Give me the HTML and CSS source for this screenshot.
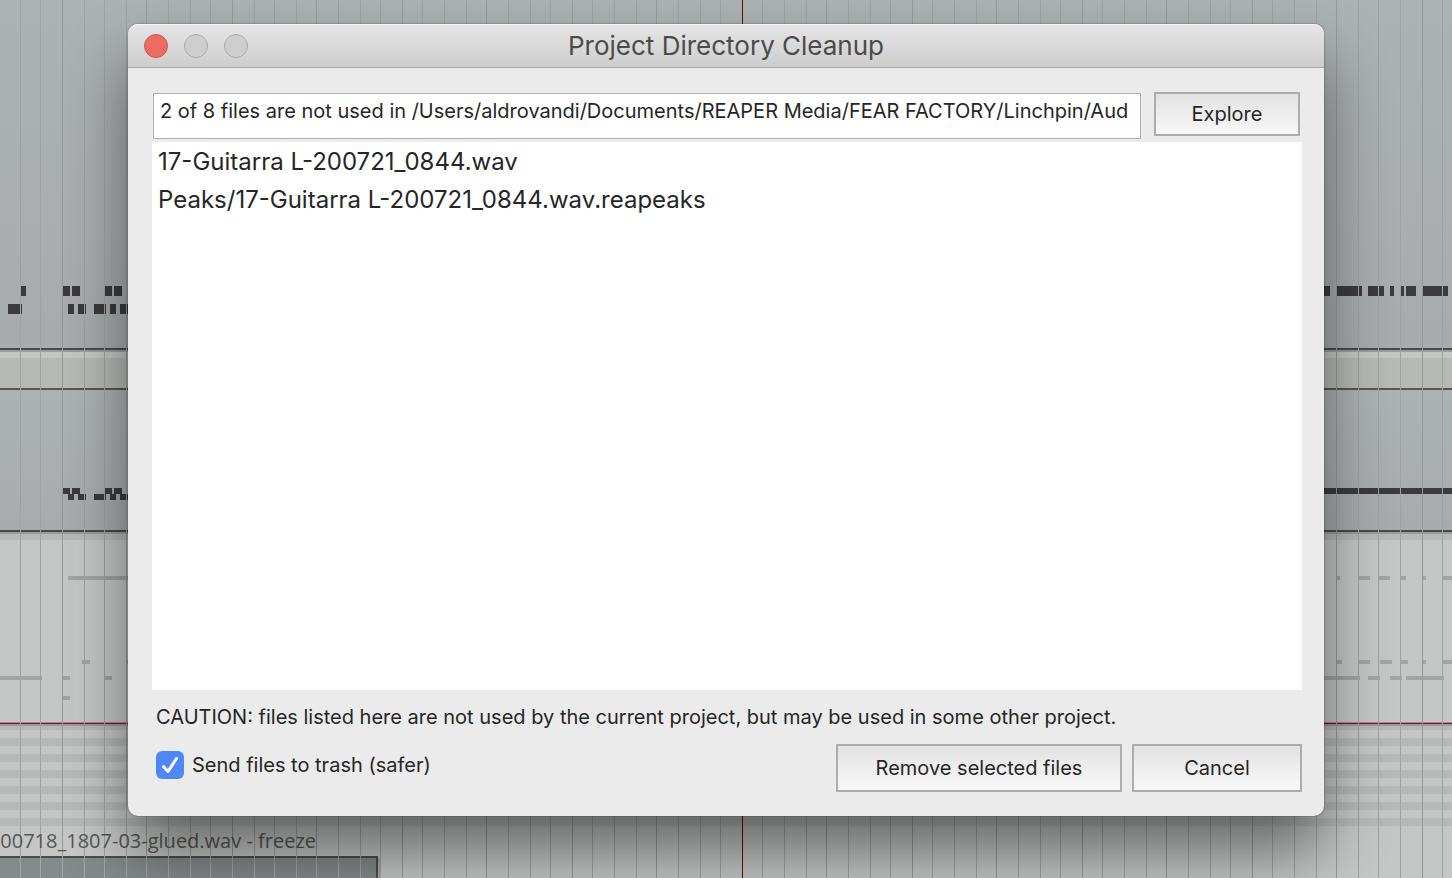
FILE: index.html
```html
<!DOCTYPE html>
<html lang="en">
<head>
<meta charset="utf-8">
<title>Project Directory Cleanup</title>
<link rel="stylesheet" href="styles.css">
</head>
<body>
<svg class="arrange" width="100%" height="100%" aria-hidden="true">
  <defs>
    <linearGradient id="lane" x1="0" y1="0" x2="0" y2="1">
      <stop offset="0" stop-color="#adb2b3"/>
      <stop offset="1" stop-color="#a7abac"/>
    </linearGradient>
    <pattern id="keys" width="16" height="16" y="738" patternUnits="userSpaceOnUse">
      <rect width="16" height="8" fill="#b6b9b7"/>
    </pattern>
  </defs>
  <rect width="100%" height="100%" fill="#c4c7c5"/>
  <rect width="100%" height="348" fill="url(#lane)"/>
  <rect y="348" width="100%" height="2" fill="#494a4a"/>
  <rect y="350" width="100%" height="2" fill="#9b9d9d"/>
  <rect y="358" width="100%" height="30" fill="#b7b9b7"/>
  <rect y="388" width="100%" height="2" fill="#565856"/>
  <rect y="390" width="100%" height="140" fill="url(#lane)"/>
  <rect y="530" width="100%" height="2" fill="#494a4a"/>
  <rect y="532" width="100%" height="2" fill="#9b9d9d"/>
  <rect y="534" width="100%" height="6" fill="#b6b9b7"/>
  <rect y="722" width="100%" height="1" fill="#d07391"/>
  <rect y="723" width="100%" height="1" fill="#5c2439"/>
  <rect y="724" width="100%" height="2" fill="#999b9a"/>
  <rect y="726" width="100%" height="4" fill="#b6b9b7"/>
  <rect y="738" width="100%" height="88" fill="url(#keys)"/>
  <path class="note" d="M21 286h5v10h-5zM63 286h7v10h-7zM72 286h8v10h-8zM105 286h7v10h-7zM114 286h8v10h-8zM8 304h14v10h-14zM68 304h6v10h-6zM78 304h8v10h-8zM94 304h12v10h-12zM110 304h6v10h-6zM120 304h8v10h-8z"/>
  <path class="note" d="M63 488h7v6h-7zM72 488h8v6h-8zM68 494h6v6h-6zM78 494h8v6h-8zM94 494h12v6h-12zM105 488h7v6h-7zM114 488h8v6h-8zM110 494h6v6h-6zM120 494h8v6h-8z"/>
  <path class="note" d="M1320 286h10v10h-10zM1337 286h25v10h-25zM1368 286h16v10h-16zM1390 286h4v10h-4zM1401 286h3v10h-3zM1406 286h10v10h-10zM1423 286h25v10h-25zM1320 488h132v6h-132z"/>
  <path class="soft-note" d="M68 576h60v4H68zM82 660h8v4h-8zM127 660h4v4h-4zM0 676h42v4H0zM63 676h7v4h-7zM105 676h7v4h-7zM63 696h7v4h-7z"/>
  <path class="soft-note" d="M1337 576h3v4h-3zM1359 576h11v4h-11zM1379 576h11v4h-11zM1401 576h5v4h-5zM1423 576h3v4h-3zM1443 576h9v4h-9zM1337 660h5v4h-5zM1359 660h11v4h-11zM1380 660h12v4h-12zM1401 660h7v4h-7zM1423 660h3v4h-3zM1443 660h9v4h-9zM1320 676h40v4h-40zM1368 676h12v4h-12zM1390 676h12v4h-12zM1406 676h38v4h-38z"/>
  <rect y="858" width="380" height="4" fill="#a6a9a8"/>
  <rect y="862" width="380" height="40" fill="#a6a9a8"/>
  <rect y="856" width="378" height="40" fill="#4b4e4c"/>
  <rect y="858" width="376" height="40" fill="#848989"/>
  <path class="grid" d="M20.500 0V900M40.500 0V900M84.500 0V900M104.500 0V900M126.500 0V900M168.500 0V900M190.500 0V900M210.500 0V900M254.500 0V900M274.500 0V900M296.500 0V900M338.500 0V900M360.500 0V900M380.500 0V900M422.500 0V900M444.500 0V900M466.500 0V900M508.500 0V900M530.500 0V900M550.500 0V900M592.500 0V900M614.500 0V900M636.500 0V900M678.500 0V900M700.500 0V900M720.500 0V900M762.500 0V900M784.500 0V900M806.500 0V900M848.500 0V900M870.500 0V900M890.500 0V900M932.500 0V900M954.500 0V900M976.500 0V900M1018.500 0V900M1040.500 0V900M1060.500 0V900M1102.500 0V900M1124.500 0V900M1146.500 0V900M1188.500 0V900M1210.500 0V900M1230.500 0V900M1272.500 0V900M1294.500 0V900M1316.500 0V900M1358.500 0V900M1378.500 0V900M1400.500 0V900M1442.500 0V900"/>
  <path class="grid beat" d="M62.500 0V900M146.500 0V900M232.500 0V900M316.500 0V900M402.500 0V900M486.500 0V900M572.500 0V900M656.500 0V900M826.500 0V900M912.500 0V900M996.500 0V900M1082.500 0V900M1166.500 0V900M1252.500 0V900M1336.500 0V900M1422.500 0V900"/>
  <path class="clip-grid" d="M20.500 858V900M40.500 858V900M62.500 858V900M84.500 858V900M104.500 858V900M126.500 858V900M146.500 858V900M168.500 858V900M190.500 858V900M210.500 858V900M232.500 858V900M254.500 858V900M274.500 858V900M296.500 858V900M316.500 858V900M338.500 858V900M360.500 858V900"/>
  <path class="cursor" d="M742.500 0V900"/>
  <text class="clip-name" x="316" y="848" text-anchor="end">200718_1807-03-glued.wav - freeze</text>
</svg>

<main class="dialog" role="dialog" aria-labelledby="title">
  <header class="titlebar">
    <div class="lights">
      <button class="light close" type="button" aria-label="Close"></button>
      <button class="light" type="button" aria-label="Minimize" disabled></button>
      <button class="light" type="button" aria-label="Zoom" disabled></button>
    </div>
    <h1 class="title" id="title">Project Directory Cleanup</h1>
  </header>
  <form class="content">
    <div class="summary">
      <input class="path" type="text" readonly aria-label="Summary" value="2 of 8 files are not used in /Users/aldrovandi/Documents/REAPER Media/FEAR FACTORY/Linchpin/Aud">
      <button class="button explore" type="button">Explore</button>
    </div>
    <select class="files" multiple aria-label="Unused files">
      <option>17-Guitarra L-200721_0844.wav</option>
      <option>Peaks/17-Guitarra L-200721_0844.wav.reapeaks</option>
    </select>
    <p class="caution">CAUTION: files listed here are not used by the current project, but may be used in some other project.</p>
    <div class="footer">
      <label class="trash">
        <span class="tick">
          <input class="tick-input" type="checkbox" checked>
          <svg class="tick-mark" viewBox="0 0 28 28" aria-hidden="true"><path d="M7.500 15.500L12 20.500L20.500 7.500"/></svg>
        </span>
        Send files to trash (safer)
      </label>
      <div class="actions">
        <button class="button remove" type="button">Remove selected files</button>
        <button class="button cancel" type="button">Cancel</button>
      </div>
    </div>
  </form>
</main>
</body>
</html>
```
FILE: styles.css
```css
* {
  box-sizing: border-box;
}

body {
  display: flex;
  height: 100vh;
  margin: 0;
  padding: 24px 128px 62px;
  overflow: hidden;
  background: #c4c7c5;
  color: #262626;
  font-family: Inter, "Liberation Sans", sans-serif;
  font-size: 20px;
}

.arrange {
  position: absolute;
  inset: 0;
}

.note {
  fill: #3b3b3b;
}

.soft-note {
  fill: #a2a4a3;
}

.grid {
  fill: none;
  stroke: #a0a1a1;
}

.beat {
  stroke: #979999;
}

.clip-grid {
  stroke: #a6a8a8;
}

.cursor {
  stroke: #5a1214;
}

.clip-name {
  fill: #555756;
  font-family: "Open Sans", sans-serif;
  font-size: 20px;
}

.dialog {
  position: relative;
  display: flex;
  flex: 1;
  flex-direction: column;
  border-radius: 10px;
  background: #ebebeb;
  box-shadow: 0 0 2px rgba(0, 0, 0, 0.5), 0 36px 64px rgba(0, 0, 0, 0.48);
}

.titlebar {
  display: grid;
  grid-template-columns: 1fr auto 1fr;
  align-items: center;
  height: 44px;
  padding: 0 16px;
  border-bottom: 1px solid #a9a9a9;
  border-radius: 10px 10px 0 0;
  background: linear-gradient(#e6e6e6, #cdcdcd);
  box-shadow: inset 0 1px #f4f4f4;
}

.lights {
  display: flex;
  gap: 16px;
}

.light {
  width: 24px;
  height: 24px;
  padding: 0;
  border: 1px solid #aaaaaa;
  border-radius: 50%;
  background: #cecece;
}

.close {
  border-color: #d3564c;
  background: #ed6b60;
}

.title {
  margin: 0;
  color: #4b4b4b;
  font-size: 26px;
  font-weight: 400;
}

.content {
  display: flex;
  flex: 1;
  flex-direction: column;
  padding: 24px 22px 24px 24px;
}

.summary {
  display: flex;
  align-items: flex-start;
  gap: 13px;
  padding: 0 2px 0 1px;
}

.path {
  flex: 1;
  min-width: 0;
  height: 46px;
  margin: 1px 0 3px;
  padding: 0 2px 10px 6px;
  border: 1px solid #b0b0b0;
  border-radius: 0;
  outline: 0;
  background: #ffffff;
  color: inherit;
  font: inherit;
}

.button {
  height: 48px;
  padding: 0;
  border: 2px solid #adadad;
  border-radius: 0;
  background: linear-gradient(#e2e2e2, #f8f8f8);
  color: inherit;
  font: inherit;
}

.explore {
  width: 146px;
  height: 44px;
}

.files {
  flex: 1;
  min-height: 0;
  padding: 1px 0;
  overflow: auto;
  border: 0;
  border-radius: 0;
  outline: 0;
  background: #ffffff;
  color: inherit;
  font: inherit;
  font-size: 24px;
}

.files option {
  min-height: 38px;
  padding: 4px 6px;
}

.caution {
  margin: 0;
  padding: 15px 4px 0;
  line-height: 24px;
}

.footer {
  display: flex;
  align-items: flex-start;
  justify-content: space-between;
  margin-top: 15px;
}

.trash {
  display: flex;
  align-items: center;
  gap: 8px;
  margin: 7px 0 0 4px;
}

.tick {
  position: relative;
  display: flex;
}

.tick-input {
  appearance: none;
  width: 28px;
  height: 28px;
  margin: 0;
  border-radius: 6px;
  background: #4f87f6;
}

.tick-mark {
  position: absolute;
  inset: 0;
  fill: none;
  stroke: #ffffff;
  stroke-width: 3;
  stroke-linecap: round;
  stroke-linejoin: round;
  pointer-events: none;
}

.tick-input:not(:checked) + .tick-mark {
  display: none;
}

.actions {
  display: flex;
  gap: 10px;
}

.remove {
  width: 286px;
}

.cancel {
  width: 170px;
}
```
